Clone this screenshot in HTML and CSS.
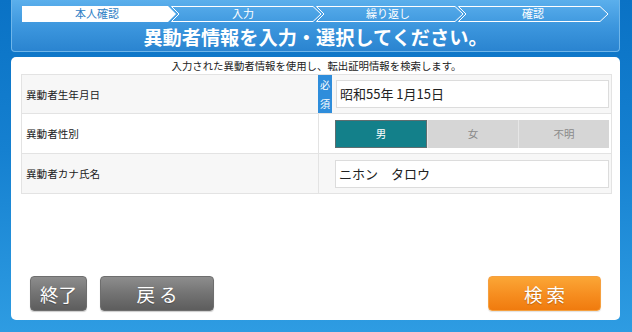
FILE: index.html
```html
<!DOCTYPE html>
<html lang="ja">
<head>
<meta charset="utf-8">
<title>異動者情報入力</title>
<link rel="stylesheet" href="styles.css">
</head>
<body>
<div class="screen">
  <header class="head">
    <svg class="steps" viewBox="0 0 607 24" width="607" height="24">
      <path d="M10,6 H156 L164,14 L156,22 H10 Z" fill="#ffffff"/>
      <path d="M159.5,6.5 H301 L309,14 L301,21.5 H159.5 L167,14 Z" fill="none" stroke="#ffffff" stroke-width="1"/>
      <path d="M304.5,6.5 H443 L451,14 L443,21.5 H304.5 L312,14 Z" fill="none" stroke="#ffffff" stroke-width="1"/>
      <path d="M446.5,6.5 H588 L596,14 L588,21.5 H446.5 L454,14 Z" fill="none" stroke="#ffffff" stroke-width="1"/>
      <text x="85" y="18" class="st cur" text-anchor="middle">本人確認</text>
      <text x="231" y="18" class="st" text-anchor="middle">入力</text>
      <text x="376" y="18" class="st" text-anchor="middle">繰り返し</text>
      <text x="521" y="18" class="st" text-anchor="middle">確認</text>
    </svg>
    <h1 class="title">異動者情報を入力・選択してください。</h1>
  </header>
  <main class="panel">
    <p class="lead">入力された異動者情報を使用し、転出証明情報を検索します。</p>
    <div class="form">
      <div class="row alt">
        <div class="label">異動者生年月日</div>
        <div class="value req-value">
          <span class="req"><span>必</span><span>須</span></span>
          <div class="input">昭和55年 1月15日</div>
        </div>
      </div>
      <div class="row">
        <div class="label">異動者性別</div>
        <div class="value">
          <div class="seg">
            <span class="opt on">男</span>
            <span class="opt">女</span>
            <span class="opt">不明</span>
          </div>
        </div>
      </div>
      <div class="row alt">
        <div class="label">異動者カナ氏名</div>
        <div class="value">
          <div class="input">ニホン　タロウ</div>
        </div>
      </div>
    </div>
    <div class="actions">
      <button class="btn gray end">終了</button>
      <button class="btn gray back">戻 る</button>
      <span class="spacer"></span>
      <button class="btn orange search">検 索</button>
    </div>
  </main>
</div>
</body>
</html>
```
FILE: styles.css
```css
html, body {
  margin: 0;
  padding: 0;
}
body {
  width: 632px;
  height: 332px;
  overflow: hidden;
  background: linear-gradient(to bottom, #0a72c5 0%, #1580d0 45%, #2e9ce2 100%);
  font-family: "Noto Sans CJK JP", "Noto Sans", sans-serif;
}
.screen {
  padding: 0 12px 0 11px;
  display: flex;
  flex-direction: column;
}
.head {
  height: 52px;
  box-sizing: border-box;
  border: 1px solid #6fb6ea;
  border-top: none;
  border-radius: 0 0 4px 4px;
  background: linear-gradient(to bottom, #5bafec 0%, #3d97de 50%, #2a84d0 100%);
}
.steps {
  display: block;
}
.st {
  font-size: 11px;
  fill: #ffffff;
  font-family: "Noto Sans CJK JP", sans-serif;
}
.st.cur {
  fill: #2f7fc6;
}
.title {
  margin: 0;
  height: 27px;
  line-height: 27px;
  font-size: 19.2px;
  font-weight: bold;
  color: #ffffff;
  text-align: center;
  letter-spacing: 0;
}
.panel {
  margin-top: 5px;
  height: 263px;
  box-sizing: border-box;
  background: #ffffff;
  border-radius: 5px;
  padding: 0 8px 9px 10px;
  display: flex;
  flex-direction: column;
}
.lead {
  margin: 0;
  height: 17px;
  line-height: 17px;
  font-size: 10.4px;
  color: #222;
  text-align: center;
}
.form {
  border: 1px solid #e3e3e3;
  border-bottom: none;
}
.row {
  display: flex;
  height: 40px;
  box-sizing: border-box;
  border-bottom: 1px solid #e3e3e3;
  background: #ffffff;
}
.row:first-child {
  height: 39px;
}
.row.alt {
  background: #f7f7f7;
}
.label {
  width: 296px;
  padding-left: 4px;
  box-sizing: border-box;
  display: flex;
  align-items: center;
  font-size: 10.6px;
  color: #222;
}
.value {
  flex: 1;
  display: flex;
  align-items: center;
  border-left: 1px solid #e3e3e3;
  padding: 0 2px 0 16px;
}
.req-value {
  border-left: none;
  padding-left: 0;
  align-items: stretch;
}
.req {
  width: 14px;
  background: #2e8ddb;
  color: #ffffff;
  font-size: 10px;
  line-height: 12px;
  display: flex;
  flex-direction: column;
  align-items: center;
  justify-content: center;
  gap: 7px;
  margin-right: 4px;
}
.req-value .input {
  align-self: center;
}
.input {
  flex: 1;
  height: 28px;
  box-sizing: border-box;
  border: 1px solid #dcdcdc;
  background: #ffffff;
  font-size: 13px;
  color: #222;
  line-height: 26px;
  padding-left: 3px;
}
.seg {
  flex: 1;
  display: flex;
  height: 28px;
}
.opt {
  flex: 1;
  display: flex;
  align-items: center;
  justify-content: center;
  font-size: 10.5px;
  color: #8a8a8a;
  background: #d6d6d6;
  border-left: 1px solid #e6e6e6;
}
.opt.on {
  background: #13808a;
  color: #ffffff;
  border: 1px solid #5e6e70;
}
.actions {
  margin-top: auto;
  display: flex;
  align-items: center;
  padding: 0 11px 0 9px;
}
.spacer {
  flex: 1;
}
.btn {
  height: 35px;
  border-radius: 4px;
  font-family: "Noto Sans CJK JP", sans-serif;
  font-size: 18.5px;
  color: #ffffff;
  padding: 0;
  cursor: pointer;
  text-shadow: 0 1px 1px rgba(0, 0, 0, 0.25);
}
.btn.gray {
  background: linear-gradient(to bottom, #8d8d8d 0%, #737373 50%, #5d5d5d 100%);
  border: 1px solid #6e6e6e;
  box-shadow: 0 1px 1px rgba(0, 0, 0, 0.2);
}
.btn.end {
  width: 57px;
}
.btn.back {
  width: 114px;
  margin-left: 13px;
}
.btn.orange {
  width: 113px;
  background: linear-gradient(to bottom, #fba636 0%, #f68d1f 55%, #f07b0e 100%);
  border: 1px solid #f5a040;
  box-shadow: 0 1px 1px rgba(0, 0, 0, 0.12);
}
```
